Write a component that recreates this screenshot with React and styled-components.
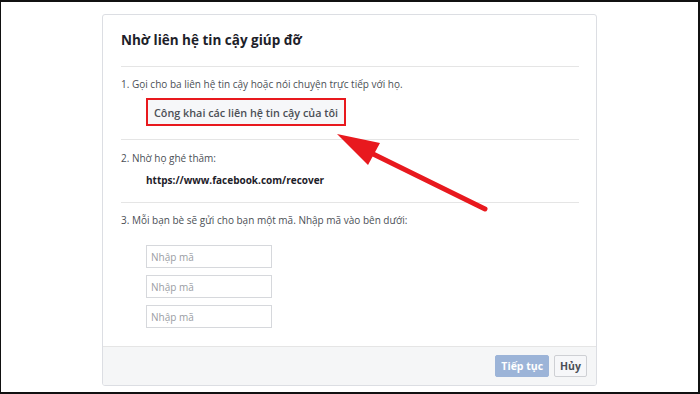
import styled, { createGlobalStyle } from "styled-components";

const GlobalStyle = createGlobalStyle`
  html, body {
    margin: 0;
    padding: 0;
    background: #fff;
  }
  body {
    font-family: "Open Sans", "Liberation Sans", sans-serif;
  }
`;

const Frame = styled.div`
  position: relative;
  width: 700px;
  height: 394px;
  box-sizing: border-box;
  border: 2px solid #111;
  border-left-width: 1px;
  padding-top: 12px;
  display: flex;
  justify-content: center;
  align-items: flex-start;
  background: #fff;
`;

const Card = styled.div`
  width: 495px;
  height: 372px;
  box-sizing: border-box;
  border: 1px solid #dcdee3;
  border-radius: 3px;
  background: #fff;
  display: flex;
  flex-direction: column;
  overflow: hidden;
`;

const Header = styled.div`
  margin: 0 17px 0 18px;
  padding: 15px 0 16px;
  border-bottom: 1px solid #e5e5e5;
`;

const Title = styled.h2`
  margin: 0;
  font-size: 13.5px;
  line-height: 20px;
  font-weight: 700;
  color: #1d2129;
`;

const Body = styled.div`
  flex: 1;
  margin: 0 17px 0 18px;
`;

const Section = styled.div`
  padding: ${(p) => p.$top}px 0 ${(p) => p.$bottom}px;
  border-bottom: ${(p) => (p.$last ? "none" : "1px solid #e5e5e5")};
`;

const Step = styled.p`
  margin: 0;
  font-size: 10px;
  line-height: 16px;
  color: #4b4f56;
`;

const Highlight = styled.div`
  display: inline-block;
  margin: 6px 0 0 25px;
  border: 2px solid #e8191e;
`;

const GrayButton = styled.div`
  height: 24px;
  padding: 0 6px;
  display: flex;
  align-items: center;
  background: #f6f7f9;
  font-size: 10.8px;
  font-weight: 600;
  color: #4b4f56;
`;

const Url = styled.p`
  margin: 6px 0 0 25px;
  font-size: 10px;
  line-height: 16px;
  font-weight: 700;
  color: #1d2129;
`;

const Inputs = styled.div`
  display: flex;
  flex-direction: column;
  gap: 7px;
  margin: 17px 0 0 25px;
`;

const CodeInput = styled.input`
  width: 126px;
  height: 23px;
  box-sizing: border-box;
  border: 1px solid #d6d8dc;
  padding: 0 4px;
  font-family: inherit;
  font-size: 10px;
  color: #1d2129;
  outline: none;
  &::placeholder {
    color: #9a9da3;
  }
`;

const Footer = styled.div`
  height: 39px;
  box-sizing: border-box;
  background: #f5f6f7;
  border-top: 1px solid #e5e5e5;
  display: flex;
  justify-content: flex-end;
  align-items: center;
  gap: 5px;
  padding: 0 9px;
`;

const Button = styled.button`
  height: 22px;
  padding: 0 ${(p) => (p.$primary ? 5 : 5)}px;
  border-radius: 2px;
  border: 1px solid ${(p) => (p.$primary ? "#9cb4d8" : "#ced0d4")};
  background: ${(p) => (p.$primary ? "#9cb4d8" : "#f6f7f9")};
  color: ${(p) => (p.$primary ? "#fff" : "#4b4f56")};
  font-family: inherit;
  font-size: 10.5px;
  font-weight: 700;
`;

const ArrowLayer = styled.svg`
  position: absolute;
  left: 0;
  top: 0;
  pointer-events: none;
`;

const Arrow = () => (
  <ArrowLayer width="700" height="394" viewBox="0 0 700 394">
    <line x1="484" y1="207" x2="366" y2="149" stroke="#e8191e" strokeWidth="5" strokeLinecap="round" />
    <polygon points="336,132 379,141 367,163" fill="#e8191e" />
  </ArrowLayer>
);

export default function App() {
  return (
    <>
      <GlobalStyle />
      <Frame>
        <Card>
          <Header>
            <Title>Nhờ liên hệ tin cậy giúp đỡ</Title>
          </Header>
          <Body>
            <Section $top={9} $bottom={13}>
              <Step>1. Gọi cho ba liên hệ tin cậy hoặc nói chuyện trực tiếp với họ.</Step>
              <Highlight>
                <GrayButton>Công khai các liên hệ tin cậy của tôi</GrayButton>
              </Highlight>
            </Section>
            <Section $top={10} $bottom={14}>
              <Step>2. Nhờ họ ghé thăm:</Step>
              <Url>https://www.facebook.com/recover</Url>
            </Section>
            <Section $top={9} $bottom={0} $last>
              <Step>3. Mỗi bạn bè sẽ gửi cho bạn một mã. Nhập mã vào bên dưới:</Step>
              <Inputs>
                <CodeInput placeholder="Nhập mã" />
                <CodeInput placeholder="Nhập mã" />
                <CodeInput placeholder="Nhập mã" />
              </Inputs>
            </Section>
          </Body>
          <Footer>
            <Button $primary>Tiếp tục</Button>
            <Button>Hủy</Button>
          </Footer>
        </Card>
        <Arrow />
      </Frame>
    </>
  );
}
